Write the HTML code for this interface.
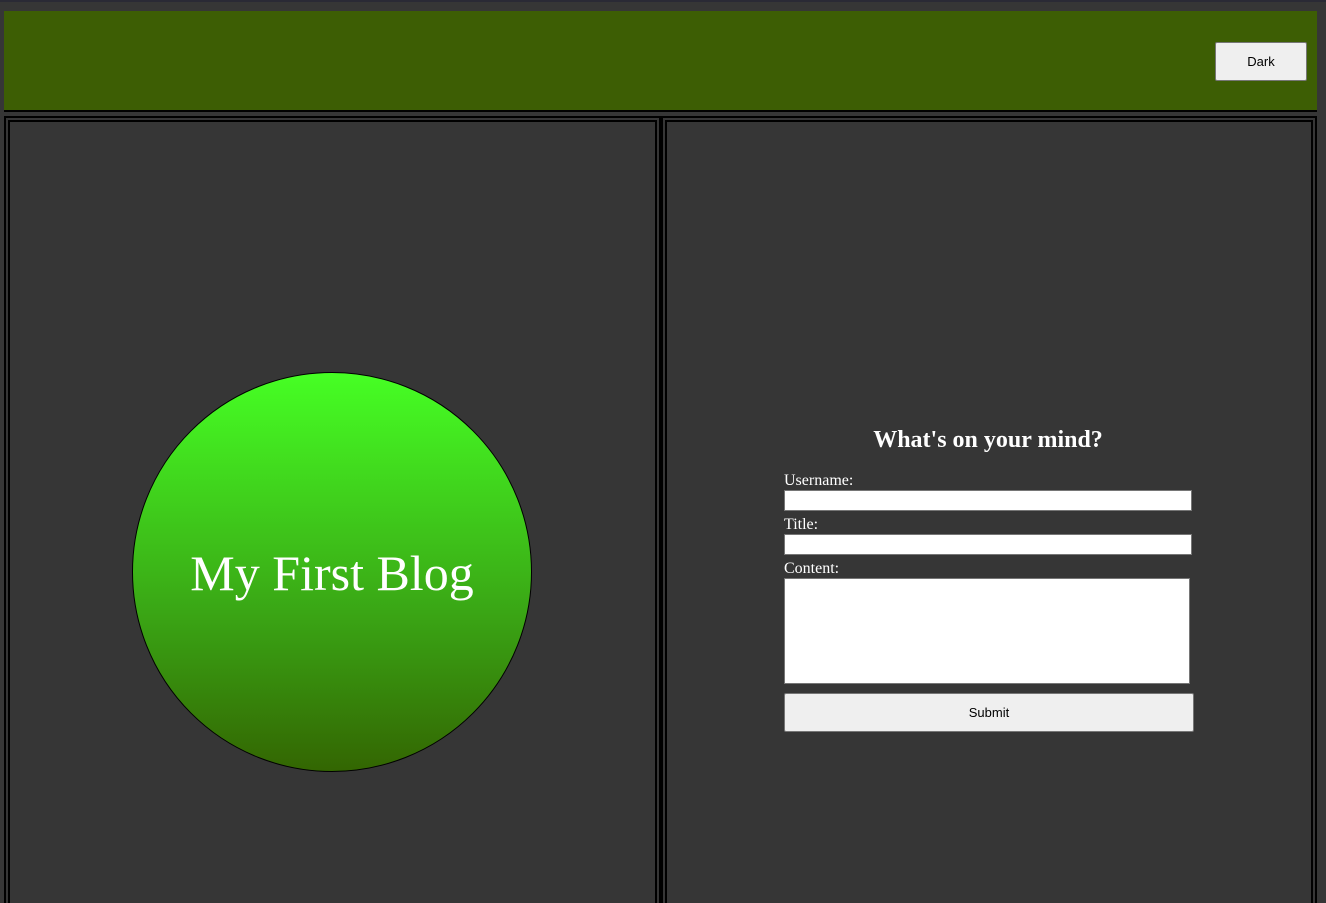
<!DOCTYPE html>
<html><head><style>
html,body{margin:0;padding:0;overflow:hidden;height:903px;}
body{width:1326px;background:#363636;position:relative;font-family:"Liberation Serif",serif;}
.top{position:absolute;left:0;top:0;width:1326px;height:2px;background:#2a2a35;}
.hdr{position:absolute;left:4px;top:11px;width:1313px;height:99px;background:#3d5e04;border-bottom:2px solid #000;}
.btn{position:absolute;box-sizing:border-box;background:#efefef;border:1px solid #767676;border-radius:2px;font:13px "Liberation Sans",sans-serif;color:#000;display:flex;align-items:center;justify-content:center;}
.panel{position:absolute;top:116px;height:787px;box-sizing:border-box;border:6px double #000;border-bottom:none;background:#363636;}
.circle{position:absolute;left:132px;top:372px;width:400px;height:400px;box-sizing:border-box;border-radius:50%;border:1px solid #000;background:linear-gradient(#46ff24,#3aa615 60%,#336602);}
.circle span{position:absolute;left:0;right:0;top:171px;text-align:center;color:#fff;font-size:50px;}
.lbl{position:absolute;left:784px;color:#fff;font-size:16px;}
.inp{position:absolute;left:784px;width:408px;background:#fff;box-sizing:border-box;border:1px solid #767676;}
h2{position:absolute;left:662px;width:652px;top:427px;margin:0;text-align:center;color:#fff;font-size:24px;font-weight:bold;}
</style></head><body>
<div class="top"></div>
<div class="hdr"></div>
<div class="btn" style="left:1215px;top:42px;width:92px;height:39px;">Dark</div>
<div class="panel" style="left:4px;width:657px;"></div>
<div class="panel" style="left:661px;width:656px;"></div>
<div class="circle"><span>My First Blog</span></div>
<h2>What's on your mind?</h2>
<div class="lbl" style="top:472px">Username:</div>
<div class="inp" style="top:490px;height:21px"></div>
<div class="lbl" style="top:516px">Title:</div>
<div class="inp" style="top:534px;height:21px"></div>
<div class="lbl" style="top:560px">Content:</div>
<div class="inp" style="top:578px;height:106px;width:406px"></div>
<div class="btn" style="left:784px;top:693px;width:410px;height:39px;">Submit</div>
</body></html>
